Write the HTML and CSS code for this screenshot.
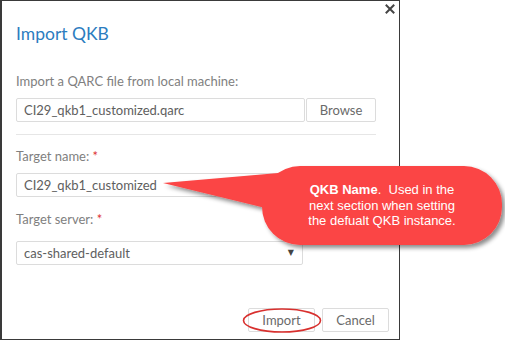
FILE: index.html
```html
<!DOCTYPE html>
<html lang="en">
<head>
    <meta charset="UTF-8">
    <title>Import QKB</title>
    <link rel="stylesheet" href="styles.css">
</head>
<body>
    <div class="dialog">
        <svg class="close" width="10" height="10" viewBox="0 0 10 10">
            <path d="M1.5 1.5 L8.5 8.5 M8.5 1.5 L1.5 8.5" stroke="#444" stroke-width="2" stroke-linecap="square"/>
        </svg>
        <h1 class="title">Import QKB</h1>

        <div class="field first">
            <label class="label">Import a QARC file from local machine:</label>
            <div class="file-row">
                <div class="input">CI29_qkb1_customized.qarc</div>
                <div class="btn browse">Browse</div>
            </div>
        </div>

        <div class="sep"></div>

        <div class="field name">
            <label class="label">Target name: <span class="req">*</span></label>
            <div class="input short">CI29_qkb1_customized</div>
        </div>

        <div class="field server">
            <label class="label">Target server: <span class="req">*</span></label>
            <div class="select">
                <span>cas-shared-default</span>
                <span class="arrow">&#9660;</span>
            </div>
        </div>

        <div class="footer">
            <div class="btn">Import</div>
            <div class="btn">Cancel</div>
        </div>
    </div>

    <!-- annotation layer: callout bubble and ellipse drawn over the dialog -->
    <svg class="annot" width="505" height="341" viewBox="0 0 505 341">
        <defs>
            <filter id="shadow" x="-10%" y="-20%" width="130%" height="150%">
                <feDropShadow dx="3" dy="3" stdDeviation="2" flood-color="#000" flood-opacity="0.45"/>
            </filter>
        </defs>
        <g filter="url(#shadow)" fill="#fb4545">
            <rect x="262" y="166" width="240" height="79" rx="38" ry="38"/>
            <polygon points="163,183 290,172 290,214"/>
        </g>
        <ellipse cx="282" cy="320.5" rx="38.5" ry="11.5" fill="none" stroke="#d8302e" stroke-width="1.6"/>
    </svg>
    <div class="callout-text">
        <b>QKB Name</b>.&nbsp; Used in the<br>
        next section when setting<br>
        the defualt QKB instance.
    </div>
</body>
</html>
```

FILE: styles.css
```css
* {
    margin: 0;
    padding: 0;
    box-sizing: border-box;
}

body {
    background: #ffffff;
    width: 505px;
    height: 341px;
    position: relative;
    overflow: hidden;
    font-family: 'Lato', sans-serif;
}

.dialog {
    width: 400px;
    height: 340px;
    border: 1px solid #3a3a3a;
    border-left-width: 2px;
    padding: 23px 23px 0 14px;
    display: flex;
    flex-direction: column;
    position: relative;
}

.close {
    position: absolute;
    top: 3px;
    right: 4px;
}

.title {
    font-size: 17.5px;
    line-height: 20px;
    font-weight: normal;
    color: #2c7dbf;
}

.field {
    display: flex;
    flex-direction: column;
}

.field.first {
    margin-top: 29px;
}

.label {
    font-size: 13px;
    line-height: 16px;
    color: #808080;
    margin-bottom: 9px;
}

.req {
    color: #d33;
}

.file-row {
    display: flex;
    gap: 1px;
}

.input,
.select,
.btn {
    height: 24px;
    border: 1px solid #dcdcdc;
    border-radius: 2px;
    font-size: 13px;
    line-height: 22px;
    color: #5e5e5e;
    background: #fff;
}

.input,
.select {
    padding: 0 7px;
}

.file-row .input {
    flex: 1;
}

.btn {
    text-align: center;
    color: #6a6a6a;
}

.browse {
    width: 70px;
}

.sep {
    height: 1px;
    background: #e6e6e6;
    margin-top: 12px;
}

.field.name {
    margin-top: 13px;
}

.input.short,
.select {
    width: 287px;
}

.field.server {
    margin-top: 14px;
}

.field.server .label {
    margin-bottom: 14px;
}

.select {
    display: flex;
    justify-content: space-between;
    align-items: center;
}

.arrow {
    font-size: 8px;
    color: #444;
    margin-right: 1px;
    font-family: 'DejaVu Sans', sans-serif;
}

.footer {
    margin-top: auto;
    margin-bottom: 7px;
    margin-right: -13px;
    display: flex;
    justify-content: flex-end;
    gap: 7px;
}

.footer .btn {
    width: 67px;
}

.annot {
    position: absolute;
    top: 0;
    left: 0;
    pointer-events: none;
}

.callout-text {
    position: absolute;
    left: 282px;
    top: 182px;
    width: 200px;
    text-align: center;
    font-family: 'Liberation Sans', Arial, sans-serif;
    font-size: 13px;
    line-height: 15.5px;
    color: #fff;
}
```
